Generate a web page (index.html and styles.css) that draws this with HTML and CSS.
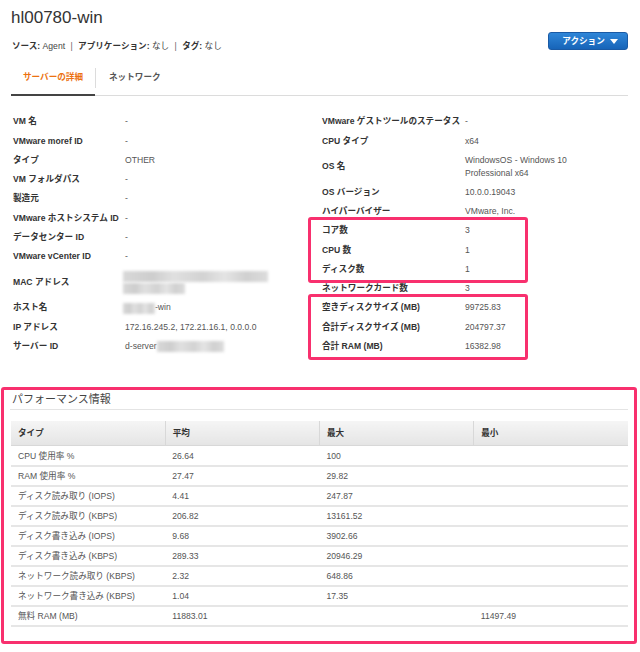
FILE: index.html
```html
<!DOCTYPE html>
<html lang="ja">
<head>
<meta charset="utf-8">
<title>hl00780-win</title>
<link rel="stylesheet" href="styles.css">
</head>
<body>
<div class="page">
  <header class="head">
    <div class="head-main">
      <h1 class="title">hl00780-win</h1>
      <p class="meta"><b>ソース:</b> Agent <span class="sep">|</span> <b>アプリケーション:</b> なし <span class="sep">|</span> <b>タグ:</b> なし</p>
    </div>
    <button class="action">アクション <span class="caret"></span></button>
  </header>

  <nav class="tabs">
    <span class="tab active">サーバーの詳細</span>
    <span class="tab-div"></span>
    <span class="tab">ネットワーク</span>
  </nav>

  <section class="details">
    <div class="col col-left">
      <div class="row"><span class="k">VM 名</span><span class="v">-</span></div>
      <div class="row"><span class="k">VMware moref ID</span><span class="v">-</span></div>
      <div class="row"><span class="k">タイプ</span><span class="v">OTHER</span></div>
      <div class="row"><span class="k">VM フォルダパス</span><span class="v">-</span></div>
      <div class="row"><span class="k">製造元</span><span class="v">-</span></div>
      <div class="row"><span class="k">VMware ホストシステム ID</span><span class="v">-</span></div>
      <div class="row"><span class="k">データセンター ID</span><span class="v">-</span></div>
      <div class="row"><span class="k">VMware vCenter ID</span><span class="v">-</span></div>
      <div class="row tall"><span class="k">MAC アドレス</span><span class="v"><span class="blur b1"></span><br><span class="blur b2"></span></span></div>
      <div class="row"><span class="k">ホスト名</span><span class="v"><span class="blur b3"></span>-win</span></div>
      <div class="row"><span class="k">IP アドレス</span><span class="v">172.16.245.2, 172.21.16.1, 0.0.0.0</span></div>
      <div class="row"><span class="k">サーバー ID</span><span class="v">d-server<span class="blur b4"></span></span></div>
    </div>
    <div class="col col-right">
      <div class="row"><span class="k">VMware ゲストツールのステータス</span><span class="v">-</span></div>
      <div class="row"><span class="k">CPU タイプ</span><span class="v">x64</span></div>
      <div class="row tall"><span class="k">OS 名</span><span class="v">WindowsOS - Windows 10<br>Professional x64</span></div>
      <div class="row"><span class="k">OS バージョン</span><span class="v">10.0.0.19043</span></div>
      <div class="row"><span class="k">ハイパーバイザー</span><span class="v">VMware, Inc.</span></div>
      <div class="hl">
        <div class="row"><span class="k">コア数</span><span class="v">3</span></div>
        <div class="row"><span class="k">CPU 数</span><span class="v">1</span></div>
        <div class="row"><span class="k">ディスク数</span><span class="v">1</span></div>
      </div>
      <div class="row"><span class="k">ネットワークカード数</span><span class="v">3</span></div>
      <div class="hl">
        <div class="row"><span class="k">空きディスクサイズ (MB)</span><span class="v">99725.83</span></div>
        <div class="row"><span class="k">合計ディスクサイズ (MB)</span><span class="v">204797.37</span></div>
        <div class="row"><span class="k">合計 RAM (MB)</span><span class="v">16382.98</span></div>
      </div>
    </div>
  </section>

  <section class="perf">
    <h2 class="perf-title">パフォーマンス情報</h2>
    <table class="perf-table">
      <thead>
        <tr><th>タイプ</th><th>平均</th><th>最大</th><th>最小</th></tr>
      </thead>
      <tbody>
        <tr><td>CPU 使用率 %</td><td>26.64</td><td>100</td><td></td></tr>
        <tr><td>RAM 使用率 %</td><td>27.47</td><td>29.82</td><td></td></tr>
        <tr><td>ディスク読み取り (IOPS)</td><td>4.41</td><td>247.87</td><td></td></tr>
        <tr><td>ディスク読み取り (KBPS)</td><td>206.82</td><td>13161.52</td><td></td></tr>
        <tr><td>ディスク書き込み (IOPS)</td><td>9.68</td><td>3902.66</td><td></td></tr>
        <tr><td>ディスク書き込み (KBPS)</td><td>289.33</td><td>20946.29</td><td></td></tr>
        <tr><td>ネットワーク読み取り (KBPS)</td><td>2.32</td><td>648.86</td><td></td></tr>
        <tr><td>ネットワーク書き込み (KBPS)</td><td>1.04</td><td>17.35</td><td></td></tr>
        <tr><td>無料 RAM (MB)</td><td>11883.01</td><td></td><td>11497.49</td></tr>
      </tbody>
    </table>
  </section>
</div>
</body>
</html>
```

FILE: styles.css
```css
* { box-sizing: border-box; }

html, body {
  margin: 0;
  padding: 0;
  background: #ffffff;
}

body {
  font-family: "Liberation Sans", "Noto Sans CJK JP", sans-serif;
  font-size: 8.6px;
  color: #444;
}

.page {
  padding: 8px 12px 0 11px;
}

/* header */
.head {
  display: flex;
  justify-content: space-between;
  align-items: flex-start;
}

.title {
  margin: 0;
  font-size: 17px;
  line-height: 20px;
  font-weight: normal;
  color: #333;
}

.meta {
  margin: 11.5px 0 0 1px;
  line-height: 12px;
  font-size: 8.6px;
  color: #444;
}

.meta b {
  color: #333;
  font-weight: bold;
}

.meta .sep {
  color: #666;
  margin: 0 3px;
}

.action {
  margin-top: 24px;
  width: 80px;
  height: 18px;
  padding: 0 0 0 4px;
  border: 1px solid #1a5aa5;
  border-radius: 3px;
  background: linear-gradient(#2f86d8, #1764b8);
  color: #fff;
  font-family: "Liberation Sans", "Noto Sans CJK JP", sans-serif;
  font-size: 8.6px;
  font-weight: bold;
  line-height: 16px;
  display: flex;
  align-items: center;
  justify-content: center;
  gap: 5px;
}

.caret {
  display: inline-block;
  width: 0;
  height: 0;
  border-left: 4px solid transparent;
  border-right: 4px solid transparent;
  border-top: 5px solid #fff;
}

/* tabs */
.tabs {
  display: flex;
  align-items: flex-start;
  margin-top: 11.5px;
  border-bottom: 1px solid #dcdcdc;
  height: 33px;
}

.tab {
  display: block;
  padding: 8px 13px 11px;
  line-height: 12px;
  font-weight: bold;
  color: #555;
  border-bottom: 2px solid transparent;
  height: 33px;
  white-space: nowrap;
}

.tab.active {
  color: #ec7211;
  border-bottom-color: #444;
  width: 84px;
  padding-left: 0;
  padding-right: 0;
  text-align: center;
}

.tab-div {
  width: 1px;
  height: 20px;
  margin-top: 5px;
  background: #dcdcdc;
}

/* details */
.details {
  display: grid;
  grid-template-columns: 309px 1fr;
  padding-left: 2px;
  margin-top: 16px;
}

.col .row {
  display: grid;
  padding: 3.35px 0;
  line-height: 12.6px;
}

.col-left .row { grid-template-columns: 112px 1fr; }
.col-right .row { grid-template-columns: 143px 1fr; }

.row.tall {
  align-items: center;
}

.k {
  font-weight: bold;
  color: #333;
  white-space: nowrap;
}

.v {
  color: #555;
  white-space: nowrap;
}

.hl {
  border: 3px solid #f8306e;
  border-radius: 3px;
  margin: -4px 0 -4px -14px;
  padding: 1px 0 1px 11px;
  width: 220px;
}

.blur {
  display: inline-block;
  height: 11px;
  vertical-align: middle;
  filter: blur(1.8px);
  background: linear-gradient(90deg, #d8d8d8 0%, #cdcdcd 20%, #e0e0e0 35%, #d2d2d2 55%, #e4e4e4 70%, #d0d0d0 85%, #dcdcdc 100%);
}

.b1 { width: 145px; margin-left: -2px; }
.b2 { width: 62px; margin-left: -2px; }
.b3 { width: 32px; margin-left: -2px; }
.b4 { width: 67px; }

/* performance */
.perf {
  margin: 31px -9px 0 -10px;
  border: 3px solid #f8306e;
  border-radius: 3px;
  padding: 2px 6px 14px 6px;
}

.perf-title {
  margin: 0;
  padding: 0 0 3px 2px;
  font-size: 11px;
  line-height: 14px;
  font-weight: normal;
  color: #444;
  border-bottom: 1px solid #e4e4e4;
}

.perf-table {
  width: calc(100% - 1px);
  margin: 11px 0 0 1px;
  border-collapse: collapse;
  table-layout: fixed;
}

.perf-table th {
  height: 25px;
  padding: 0 7px;
  text-align: left;
  font-weight: bold;
  color: #333;
  background: linear-gradient(#f5f5f5, #e5e5e5);
  border-left: 1px solid #f8f8f8;
  border-right: 1px solid #d8d8d8;
  border-bottom: 1px solid #d8d8d8;
  line-height: 12px;
}

.perf-table th:first-child { border-left: none; }
.perf-table th:last-child { border-right: none; }

.perf-table td {
  height: 20px;
  padding: 0 7px;
  color: #555;
  line-height: 12px;
  border-bottom: 2px solid #e6e6e6;
}
```
